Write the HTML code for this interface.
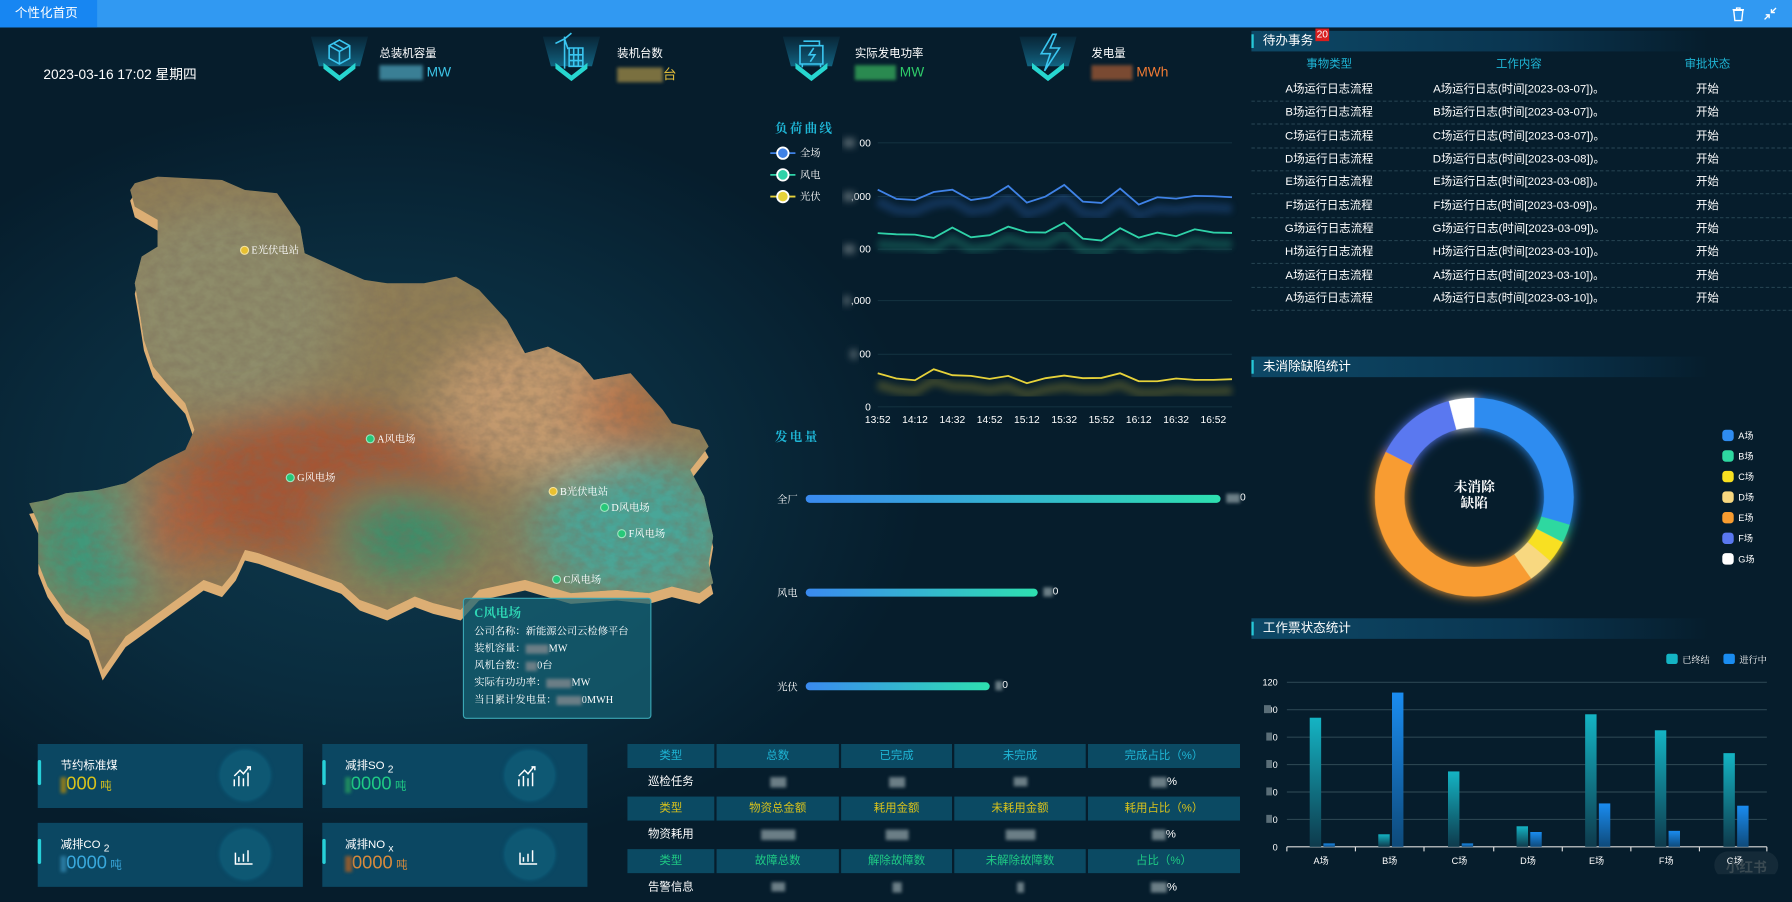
<!DOCTYPE html>
<html><head><meta charset="utf-8">
<style>
*{margin:0;padding:0;box-sizing:border-box}
html,body{width:1792px;height:902px;overflow:hidden;background:#051a29}
#s{position:absolute;left:0;top:0;width:1568px;height:789px;transform:scale(1.142857);transform-origin:0 0;
 font-family:"Liberation Sans","Noto Sans CJK SC",sans-serif;color:#fff;
 background:radial-gradient(ellipse 600px 420px at 330px 420px,#0e3a4e 0%,#0a2c3e 45%,#061d2c 80%),#051a29;overflow:hidden}
.a{position:absolute;white-space:nowrap}
.blur{display:inline-block;background:#6b7e86;filter:blur(1.5px);vertical-align:middle}
.hd{position:absolute;left:1095px;width:400px;height:18px;background:linear-gradient(90deg,#0d4866,#0a3550 60%,rgba(6,29,44,0));font-size:11px;line-height:18px;padding-left:10px}
.hd:before{content:"";position:absolute;left:0;top:3px;width:2px;height:12px;background:#27c8d8}
.tr{position:absolute;left:1095px;width:473px;height:20px;border-bottom:1px dashed #23404e;font-size:10px;line-height:20px}
.tr span{position:absolute;transform:translateX(-50%)}
.card{position:absolute;width:232px;height:56px;background:#0b4762}
.card:before{content:"";position:absolute;left:0;top:14px;width:3px;height:22px;background:#27d0d8;border-radius:2px}
.card .t{position:absolute;left:20px;top:10px;font-size:10px}
.card .v{position:absolute;left:20px;top:27px;font-size:16px}
.card .v small{font-size:10px;margin-left:3px}
.card .c{position:absolute;left:160px;top:6px;width:43px;height:43px;border-radius:50%;background:#0e5873;box-shadow:0 0 4px #0f6a88}
.tb{position:absolute;left:549px;top:651px;width:536px}
.row{position:absolute;left:0;width:536px;height:23px}
.cell{position:absolute;top:0;height:21px;font-size:10px;line-height:21px;text-align:center}
.h .cell{background:#0b4a63}
.sf{font-family:"Liberation Serif","Noto Serif CJK SC",serif}
.ml{position:absolute;font-size:9px;white-space:nowrap;font-family:"Liberation Serif","Noto Serif CJK SC",serif;line-height:10px}
.ml i{display:inline-block;width:8px;height:8px;border-radius:50%;border:1px solid #fff8;margin-right:2px;vertical-align:-1px}
</style></head><body>
<div id="s">
<!-- top bar -->
<div class="a" style="left:0;top:0;width:1568px;height:24px;background:#3199f2"></div>
<div class="a" style="left:0;top:0;width:85px;height:24px;background:#1786f2;font-size:11px;line-height:24px;padding-left:13px">个性化首页</div>
<svg class="a" style="left:1514px;top:5px" width="14" height="14" viewBox="0 0 14 14"><path d="M3 4h8l-1 9H4z M2 3.5h10 M5.5 3.5V2h3v1.5" fill="none" stroke="#fff" stroke-width="1.2"/></svg>
<svg class="a" style="left:1543px;top:6px" width="12" height="12" viewBox="0 0 12 12"><path d="M11 1L7 5M7 2v3h3 M1 11l4-4M2 7h3v3" fill="none" stroke="#fff" stroke-width="1.2"/></svg>

<!-- date -->
<div class="a" style="left:38px;top:56px;font-size:12px">2023-03-16 17:02 星期四</div>

<!-- header stats -->
<svg class="a" style="left:0;top:24px" width="1090" height="60" viewBox="0 24 1090 60">
 <defs><linearGradient id="gl" x1="0" y1="0" x2="0" y2="1"><stop offset="0" stop-color="#1a7fa8" stop-opacity=".1"/><stop offset="1" stop-color="#1a9fc8" stop-opacity=".55"/></linearGradient>
 <g id="ic">
  <path d="M-25 32 L25 32 L18 58 L-18 58Z" fill="url(#gl)"/>
  <path d="M-14 55 L0 66 L14 55 L14 60 L0 71 L-14 60Z" fill="#27d6d0"/>
 </g></defs>
 <use href="#ic" x="297"/><use href="#ic" x="500"/><use href="#ic" x="710"/><use href="#ic" x="917"/>
 <g fill="none" stroke="#3ac6f0" stroke-width="1.4">
  <path d="M288 40l9-5 9 5v11l-9 5-9-5z M288 40l9 5 9-5 M297 45v11 M292 38l9 5"/>
  <path d="M494 60V32 M494 34l-8 4 M494 34l6-5 M494 34l3 9 M498 42h12v16h-12z M502 42v16 M506 42v16 M498 48h12 M498 53h12"/>
  <path d="M700 40h20v16h-20z M703 36h14v4 M712 42l-4 6h5l-4 6 M702 56v3 M718 56v3"/>
  <path d="M921 30l-10 17h8l-5 15 13-20h-8l5-12z"/>
 </g>
</svg>
<div class="a" style="left:332px;top:38px;font-size:10px">总装机容量</div>
<div class="a" style="left:540px;top:38px;font-size:10px">装机台数</div>
<div class="a" style="left:748px;top:38px;font-size:10px">实际发电功率</div>
<div class="a" style="left:955px;top:38px;font-size:10px">发电量</div>
<div class="a" style="left:332px;top:56px;font-size:12px;color:#3cc4e6"><span class="blur" style="width:38px;height:13px;background:#3a7f95"></span> MW</div>
<div class="a" style="left:540px;top:56px;font-size:12px;color:#e2bd3a"><span class="blur" style="width:40px;height:13px;background:#7a7040"></span>台</div>
<div class="a" style="left:748px;top:56px;font-size:12px;color:#2fcc6a"><span class="blur" style="width:36px;height:13px;background:#2a8a50"></span> MW</div>
<div class="a" style="left:955px;top:56px;font-size:12px;color:#f07a34"><span class="blur" style="width:36px;height:13px;background:#7a4a32"></span> MWh</div>

<!-- map -->
<svg class="a" style="left:0;top:0" width="760" height="789" viewBox="0 0 760 789">
 <defs>
  <clipPath id="cp"><polygon id="pg" points="250,40 300,20 440,30 490,60 560,70 610,170 620,250 700,300 750,330 800,340 880,340 950,320 1000,360 1060,450 1100,550 1150,530 1220,580 1250,630 1330,610 1400,720 1420,760 1480,780 1500,830 1460,900 1490,980 1510,1100 1500,1180 1510,1240 1480,1270 1420,1250 1370,1270 1300,1260 1200,1270 1100,1230 1000,1260 960,1320 900,1300 860,1280 800,1320 740,1290 700,1240 620,1200 560,1170 520,1150 490,1140 470,1200 440,1250 400,1230 340,1290 280,1350 230,1400 200,1460 180,1500 150,1380 100,1330 60,1250 40,1180 40,1060 20,1000 60,990 100,970 170,960 230,940 300,880 360,840 380,780 360,700 320,640 290,590 270,510 260,420 250,340 265,260 300,230 300,150 250,110 240,60"/></clipPath>
  <filter id="bl" x="-20%" y="-20%" width="140%" height="140%"><feGaussianBlur stdDeviation="60"/></filter>
  <filter id="tx"><feTurbulence type="fractalNoise" baseFrequency="0.04" numOctaves="3" seed="3"/><feColorMatrix values="0 0 0 0 0.2  0 0 0 0 0.15  0 0 0 0 0.1  0 0 0 -1.6 1.1"/></filter>
 </defs>
 <g transform="translate(17.5,148.7) scale(0.4017,0.2916)">
  <use href="#pg" transform="translate(0,32)" fill="#dcae74"/>
  <g clip-path="url(#cp)">
   <rect x="0" y="0" width="1600" height="1600" fill="#8f7d56"/>
   <g filter="url(#bl)">
    <ellipse cx="450" cy="420" rx="260" ry="320" fill="#8e8c6a"/>
    <ellipse cx="650" cy="950" rx="330" ry="230" fill="#a45636"/>
    <ellipse cx="1120" cy="700" rx="220" ry="220" fill="#c39a6e"/>
    <ellipse cx="1320" cy="720" rx="80" ry="120" fill="#b86a40"/>
    <ellipse cx="1340" cy="1080" rx="220" ry="220" fill="#4aa698"/>
    <ellipse cx="830" cy="1090" rx="150" ry="140" fill="#3a8e6a"/>
    <ellipse cx="170" cy="1120" rx="150" ry="200" fill="#3a9a7c"/>
    <ellipse cx="330" cy="1060" rx="80" ry="160" fill="#b0603a"/>
   </g>
   <rect x="0" y="0" width="1600" height="1600" filter="url(#tx)" opacity=".45"/>
  </g>
 </g>
</svg>
<div class="ml" style="left:210px;top:214px"><i style="background:#e8c030"></i>E光伏电站</div>
<div class="ml" style="left:320px;top:379px"><i style="background:#27c878"></i>A风电场</div>
<div class="ml" style="left:250px;top:413px"><i style="background:#27c878"></i>G风电场</div>
<div class="ml" style="left:480px;top:425px"><i style="background:#e8c030"></i>B光伏电站</div>
<div class="ml" style="left:525px;top:439px"><i style="background:#27c878"></i>D风电场</div>
<div class="ml" style="left:540px;top:462px"><i style="background:#27c878"></i>F风电场</div>
<div class="ml" style="left:483px;top:502px"><i style="background:#27c878"></i>C风电场</div>
<!-- tooltip -->
<div class="a sf" style="left:405px;top:523px;width:165px;height:106px;background:rgba(22,100,118,.72);border:1px solid #3aa6b4;border-radius:3px;font-size:9px;line-height:15px;padding:5px 0 0 9px">
 <div style="color:#2ed6b4;font-size:11px;font-weight:bold;line-height:16px">C风电场</div>
 <div>公司名称：新能源公司云检修平台</div>
 <div>装机容量：<span class="blur" style="width:20px;height:8px"></span>MW</div>
 <div>风机台数：<span class="blur" style="width:10px;height:8px"></span>0台</div>
 <div>实际有功功率：<span class="blur" style="width:22px;height:8px"></span>MW</div>
 <div>当日累计发电量：<span class="blur" style="width:22px;height:8px"></span>0MWH</div>
</div>

<!-- line chart -->
<div class="a sf" style="left:678px;top:104px;font-size:11px;color:#1fb6d6;font-weight:bold;letter-spacing:2px">负荷曲线</div>
<div class="a sf" style="left:678px;top:374px;font-size:11px;color:#1fb6d6;font-weight:bold;letter-spacing:2px">发电量</div>
<svg class="a" style="left:670px;top:110px" width="430" height="270" viewBox="670 110 430 270">
 <defs><filter id="gf"><feGaussianBlur stdDeviation="3"/></filter></defs>
 <g stroke="#12303e" stroke-width="1"><path d="M768 125H1078M768 172H1078M768 218H1078M768 263H1078M768 310H1078M768 356H1078"/></g>
 <g font-size="9" fill="#fff" text-anchor="end" font-family="Liberation Sans,sans-serif">
  <text x="762" y="128">00</text><text x="762" y="175">,000</text><text x="762" y="221">00</text><text x="762" y="266">,000</text><text x="762" y="313">00</text><text x="762" y="359">0</text>
 </g>
 <g fill="#52646c" filter="url(#gf)"><rect x="738" y="121" width="10" height="8"/><rect x="738" y="168" width="10" height="8"/><rect x="738" y="214" width="10" height="8"/><rect x="738" y="259" width="6" height="8"/><rect x="744" y="306" width="6" height="8"/></g>
 <g font-size="9" fill="#fff" text-anchor="middle" font-family="Liberation Sans,sans-serif">
  <text x="768" y="370">13:52</text><text x="800.6" y="370">14:12</text><text x="833.3" y="370">14:32</text><text x="865.9" y="370">14:52</text><text x="898.5" y="370">15:12</text><text x="931.2" y="370">15:32</text><text x="963.8" y="370">15:52</text><text x="996.4" y="370">16:12</text><text x="1029.1" y="370">16:32</text><text x="1061.7" y="370">16:52</text>
 </g>
 <g fill="none" stroke-width="1.6">
  <polyline opacity=".25" stroke-width="8" filter="url(#gf)" stroke="#3a7ae0" transform="translate(0,10)" points="768,166 784.3,174 800.6,175 817,168 833.3,166 849.6,175 865.9,172.6 882.2,162.7 898.5,177.3 914.8,172 931.2,161.8 947.5,176.4 963.8,177.6 980.1,165 996.4,179 1012.7,172.6 1029.1,173.8 1045.4,171.4 1061.7,171.7 1078,172.6"/>
  <polyline opacity=".25" stroke-width="8" filter="url(#gf)" stroke="#2ec8a0" transform="translate(0,10)" points="768,204 784.3,205 800.6,205.3 817,208.2 833.3,199.1 849.6,207.6 865.9,205.8 882.2,198.3 898.5,203.2 914.8,203.5 931.2,194.8 947.5,208.8 963.8,210.5 980.1,199.7 996.4,207.9 1012.7,203.5 1029.1,206.7 1045.4,200.6 1061.7,203.5 1078,203.8"/>
  <polyline opacity=".25" stroke-width="8" filter="url(#gf)" stroke="#d8c030" transform="translate(0,10)" points="768,326.6 784.3,331.2 800.6,332.7 817,323.1 833.3,328.3 849.6,328.9 865.9,331.5 882.2,328.9 898.5,335.3 914.8,330.9 931.2,328.6 947.5,330.9 963.8,330.7 980.1,326.6 996.4,333.6 1012.7,333.6 1029.1,331.2 1045.4,332.4 1061.7,332.4 1078,331.8"/>
  <polyline stroke="#3f82e6" points="768,166 784.3,174 800.6,175 817,168 833.3,166 849.6,175 865.9,172.6 882.2,162.7 898.5,177.3 914.8,172 931.2,161.8 947.5,176.4 963.8,177.6 980.1,165 996.4,179 1012.7,172.6 1029.1,173.8 1045.4,171.4 1061.7,171.7 1078,172.6"/>
  <polyline stroke="#2fd2a8" points="768,204 784.3,205 800.6,205.3 817,208.2 833.3,199.1 849.6,207.6 865.9,205.8 882.2,198.3 898.5,203.2 914.8,203.5 931.2,194.8 947.5,208.8 963.8,210.5 980.1,199.7 996.4,207.9 1012.7,203.5 1029.1,206.7 1045.4,200.6 1061.7,203.5 1078,203.8"/>
  <polyline stroke="#e6d23a" points="768,326.6 784.3,331.2 800.6,332.7 817,323.1 833.3,328.3 849.6,328.9 865.9,331.5 882.2,328.9 898.5,335.3 914.8,330.9 931.2,328.6 947.5,330.9 963.8,330.7 980.1,326.6 996.4,333.6 1012.7,333.6 1029.1,331.2 1045.4,332.4 1061.7,332.4 1078,331.8"/>
 </g>
 <g stroke-width="1.6"><path d="M674 134h22" stroke="#3f82e6"/><circle cx="685" cy="134" r="5" fill="#3f82e6" stroke="#fff"/>
 <path d="M674 153h22" stroke="#2fd2a8"/><circle cx="685" cy="153" r="5" fill="#2fd2a8" stroke="#fff"/>
 <path d="M674 172h22" stroke="#e6d23a"/><circle cx="685" cy="172" r="5" fill="#e6d23a" stroke="#fff"/></g>
 <g font-size="9" fill="#fff" font-family="Liberation Serif,Noto Serif CJK SC,serif"><text x="700" y="137">全场</text><text x="700" y="156">风电</text><text x="700" y="175">光伏</text></g>
</svg>

<!-- production bars -->
<div class="a sf" style="left:680px;top:430px;font-size:9px">全厂</div>
<div class="a" style="left:705px;top:433px;width:363px;height:7px;border-radius:4px;background:linear-gradient(90deg,#3a8af0,#2ee0b0)"></div>
<div class="a" style="left:1073px;top:430px;font-size:9px"><span class="blur" style="width:12px;height:8px"></span>0</div>
<div class="a sf" style="left:680px;top:512px;font-size:9px">风电</div>
<div class="a" style="left:705px;top:515px;width:203px;height:7px;border-radius:4px;background:linear-gradient(90deg,#3a8af0,#2ee0b0)"></div>
<div class="a" style="left:913px;top:512px;font-size:9px"><span class="blur" style="width:8px;height:8px"></span>0</div>
<div class="a sf" style="left:680px;top:594px;font-size:9px">光伏</div>
<div class="a" style="left:705px;top:597px;width:161px;height:7px;border-radius:4px;background:linear-gradient(90deg,#3a8af0,#2ee0b0)"></div>
<div class="a" style="left:871px;top:594px;font-size:9px"><span class="blur" style="width:6px;height:8px"></span>0</div>

<!-- todo table -->
<div class="hd" style="top:27px">待办事务<span style="position:absolute;left:56px;top:-2px;background:#d81e1e;font-size:9px;line-height:11px;padding:0 1px">20</span></div>
<div class="tr" style="top:47px;color:#1fb6d6;border:none"><span style="left:68px">事物类型</span><span style="left:234px">工作内容</span><span style="left:399px">审批状态</span></div>
<div class="tr" style="top:69px"><span style="left:68px">A场运行日志流程</span><span style="left:234px">A场运行日志(时间[2023-03-07])。</span><span style="left:399px">开始</span></div>
<div class="tr" style="top:89px"><span style="left:68px">B场运行日志流程</span><span style="left:234px">B场运行日志(时间[2023-03-07])。</span><span style="left:399px">开始</span></div>
<div class="tr" style="top:110px"><span style="left:68px">C场运行日志流程</span><span style="left:234px">C场运行日志(时间[2023-03-07])。</span><span style="left:399px">开始</span></div>
<div class="tr" style="top:130px"><span style="left:68px">D场运行日志流程</span><span style="left:234px">D场运行日志(时间[2023-03-08])。</span><span style="left:399px">开始</span></div>
<div class="tr" style="top:150px"><span style="left:68px">E场运行日志流程</span><span style="left:234px">E场运行日志(时间[2023-03-08])。</span><span style="left:399px">开始</span></div>
<div class="tr" style="top:171px"><span style="left:68px">F场运行日志流程</span><span style="left:234px">F场运行日志(时间[2023-03-09])。</span><span style="left:399px">开始</span></div>
<div class="tr" style="top:191px"><span style="left:68px">G场运行日志流程</span><span style="left:234px">G场运行日志(时间[2023-03-09])。</span><span style="left:399px">开始</span></div>
<div class="tr" style="top:211px"><span style="left:68px">H场运行日志流程</span><span style="left:234px">H场运行日志(时间[2023-03-10])。</span><span style="left:399px">开始</span></div>
<div class="tr" style="top:232px"><span style="left:68px">A场运行日志流程</span><span style="left:234px">A场运行日志(时间[2023-03-10])。</span><span style="left:399px">开始</span></div>
<div class="tr" style="top:252px"><span style="left:68px">A场运行日志流程</span><span style="left:234px">A场运行日志(时间[2023-03-10])。</span><span style="left:399px">开始</span></div>

<!-- defects donut -->
<div class="hd" style="top:312px">未消除缺陷统计</div>
<svg class="a" style="left:1180px;top:330px" width="388" height="210" viewBox="1180 330 388 210">
 <defs><filter id="gw" x="-30%" y="-30%" width="160%" height="160%"><feGaussianBlur stdDeviation="5" result="b"/><feMerge><feMergeNode in="b"/><feMergeNode in="SourceGraphic"/></feMerge></filter></defs>
 <g transform="rotate(-90 1290 435)" fill="none" stroke-width="26" filter="url(#gw)">
  <circle cx="1290" cy="435" r="74" stroke="#2f8cf0" stroke-dasharray="137 465" stroke-dashoffset="0"/>
  <circle cx="1290" cy="435" r="74" stroke="#2ed8a0" stroke-dasharray="14.2 465" stroke-dashoffset="-137"/>
  <circle cx="1290" cy="435" r="74" stroke="#f8e020" stroke-dasharray="16.8 465" stroke-dashoffset="-151.1"/>
  <circle cx="1290" cy="435" r="74" stroke="#f8d880" stroke-dasharray="19.4 465" stroke-dashoffset="-167.9"/>
  <circle cx="1290" cy="435" r="74" stroke="#f89c30" stroke-dasharray="196.3 465" stroke-dashoffset="-187.3"/>
  <circle cx="1290" cy="435" r="74" stroke="#5a78f0" stroke-dasharray="62 465" stroke-dashoffset="-383.6"/>
  <circle cx="1290" cy="435" r="74" stroke="#ffffff" stroke-dasharray="19.4 465" stroke-dashoffset="-445.6"/>
 </g>
 <g font-family="Liberation Serif,Noto Serif CJK SC,serif" font-size="12" font-weight="bold" fill="#fff" text-anchor="middle"><text x="1290" y="430">未消除</text><text x="1290" y="444">缺陷</text></g>
 <g font-size="8" fill="#fff" font-family="Liberation Sans,Noto Sans CJK SC,sans-serif">
  <rect x="1507" y="376" width="10" height="10" rx="3" fill="#2f8cf0"/><text x="1521" y="384">A场</text>
  <rect x="1507" y="394" width="10" height="10" rx="3" fill="#2ed8a0"/><text x="1521" y="402">B场</text>
  <rect x="1507" y="412" width="10" height="10" rx="3" fill="#f8e020"/><text x="1521" y="420">C场</text>
  <rect x="1507" y="430" width="10" height="10" rx="3" fill="#f8d880"/><text x="1521" y="438">D场</text>
  <rect x="1507" y="448" width="10" height="10" rx="3" fill="#f89c30"/><text x="1521" y="456">E场</text>
  <rect x="1507" y="466" width="10" height="10" rx="3" fill="#5a78f0"/><text x="1521" y="474">F场</text>
  <rect x="1507" y="484" width="10" height="10" rx="3" fill="#ffffff"/><text x="1521" y="492">G场</text>
 </g>
</svg>

<!-- work ticket bars -->
<div class="hd" style="top:541px">工作票状态统计</div>
<svg class="a" style="left:1095px;top:565px" width="473" height="200" viewBox="1095 565 473 200">
 <defs>
  <linearGradient id="tg" x1="0" y1="0" x2="0" y2="1"><stop offset="0" stop-color="#14b4c4"/><stop offset="1" stop-color="#0e3a4c"/></linearGradient>
  <linearGradient id="bg2" x1="0" y1="0" x2="0" y2="1"><stop offset="0" stop-color="#1a8cf0"/><stop offset="1" stop-color="#0e4a7a"/></linearGradient>
 </defs>
 <g stroke="#2a4450" stroke-width="1"><path d="M1126 597H1546M1126 621H1546M1126 645H1546M1126 669H1546M1126 693H1546M1126 717H1546"/></g>
 <path d="M1126 741H1546 M1126 741v4 M1186 741v4 M1246 741v4 M1307 741v4 M1367 741v4 M1427 741v4 M1487 741v4 M1546 741v4" stroke="#ddd" stroke-width="1"/>
 <g font-size="8" fill="#fff" text-anchor="end" font-family="Liberation Sans,sans-serif"><text x="1118" y="600">120</text><text x="1118" y="624">00</text><text x="1118" y="648">0</text><text x="1118" y="672">0</text><text x="1118" y="696">0</text><text x="1118" y="720">0</text><text x="1118" y="744">0</text></g>
 <g fill="#5a6e78"><rect x="1106" y="617" width="6" height="7"/><rect x="1108" y="641" width="5" height="7"/><rect x="1108" y="665" width="5" height="7"/><rect x="1108" y="689" width="5" height="7"/><rect x="1108" y="713" width="5" height="7"/></g>
 <g fill="url(#tg)">
  <rect x="1146" y="628" width="10" height="113"/><rect x="1206" y="730" width="10" height="11"/><rect x="1267" y="675" width="10" height="66"/><rect x="1327" y="723" width="10" height="18"/><rect x="1387" y="625" width="10" height="116"/><rect x="1448" y="639" width="10" height="102"/><rect x="1508" y="659" width="10" height="82"/>
 </g>
 <g fill="url(#bg2)">
  <rect x="1158" y="738" width="10" height="3"/><rect x="1218" y="606" width="10" height="135"/><rect x="1279" y="738" width="10" height="3"/><rect x="1339" y="728" width="10" height="13"/><rect x="1399" y="703" width="10" height="38"/><rect x="1460" y="727" width="10" height="14"/><rect x="1520" y="705" width="10" height="36"/>
 </g>
 <g font-size="8" fill="#fff" text-anchor="middle" font-family="Liberation Sans,Noto Sans CJK SC,sans-serif">
  <text x="1156" y="756">A场</text><text x="1216" y="756">B场</text><text x="1277" y="756">C场</text><text x="1337" y="756">D场</text><text x="1397" y="756">E场</text><text x="1458" y="756">F场</text><text x="1518" y="756">G场</text>
 </g>
 <rect x="1458" y="572" width="10" height="9" rx="2" fill="#14b4c4"/><text x="1472" y="580" font-size="8" fill="#fff" font-family="Liberation Serif,Noto Serif CJK SC,serif">已终结</text>
 <rect x="1508" y="572" width="10" height="9" rx="2" fill="#1a8cf0"/><text x="1522" y="580" font-size="8" fill="#fff" font-family="Liberation Serif,Noto Serif CJK SC,serif">进行中</text>
 <rect x="1500" y="745" width="56" height="24" rx="12" fill="#ffffff" opacity=".06"/>
 <text x="1528" y="763" font-size="12" fill="#3a4a52" text-anchor="middle" font-weight="bold">小红书</text>
</svg>

<!-- cards -->
<div class="card" style="left:33px;top:651px"><div class="t">节约标准煤</div><div class="v" style="color:#d8c21c"><span class="blur" style="width:5px;height:14px;background:#8a7a20"></span>000<small>吨</small></div><div class="c"></div></div>
<div class="card" style="left:282px;top:651px"><div class="t">减排SO <sub style="font-size:9px">2</sub></div><div class="v" style="color:#1fca84"><span class="blur" style="width:5px;height:14px;background:#1f8a60"></span>0000<small>吨</small></div><div class="c"></div></div>
<div class="card" style="left:33px;top:720px"><div class="t">减排CO <sub style="font-size:9px">2</sub></div><div class="v" style="color:#39a8dc"><span class="blur" style="width:5px;height:14px;background:#2a7aa0"></span>0000<small>吨</small></div><div class="c"></div></div>
<div class="card" style="left:282px;top:720px"><div class="t">减排NO <sub style="font-size:9px">x</sub></div><div class="v" style="color:#d88a3c"><span class="blur" style="width:6px;height:14px;background:#8a5a30"></span>0000<small>吨</small></div><div class="c"></div></div>
<svg class="a" style="left:0;top:640px" width="560" height="150" viewBox="0 640 560 150" fill="none" stroke="#fff" stroke-width="1.3">
 <path d="M205 688v-6M209 688v-9M213 688v-7M217 688v-12 M205 679l5-5 3 3 5-6 M216 671h3v3"/>
 <path d="M454 688v-6M458 688v-9M462 688v-7M466 688v-12 M454 679l5-5 3 3 5-6 M465 671h3v3"/>
 <path d="M206 746v10h15 M209 754v-4M213 754v-7M217 754v-10"/>
 <path d="M455 746v10h15 M458 754v-4M462 754v-7M466 754v-10"/>
</svg>

<!-- stats table -->
<div class="tb">
 <div class="row h" style="top:0;color:#1fb6d6"><div class="cell" style="left:0;width:76px">类型</div><div class="cell" style="left:78px;width:107px">总数</div><div class="cell" style="left:187px;width:97px">已完成</div><div class="cell" style="left:286px;width:115px">未完成</div><div class="cell" style="left:403px;width:133px">完成占比（%）</div></div>
 <div class="row" style="top:23px"><div class="cell" style="left:0;width:76px">巡检任务</div><div class="cell" style="left:78px;width:107px"><span class="blur" style="width:14px;height:9px"></span></div><div class="cell" style="left:187px;width:97px"><span class="blur" style="width:14px;height:9px"></span></div><div class="cell" style="left:286px;width:115px"><span class="blur" style="width:12px;height:8px"></span></div><div class="cell" style="left:403px;width:133px"><span class="blur" style="width:14px;height:9px"></span>%</div></div>
 <div class="row h" style="top:46px;color:#d8c21c"><div class="cell" style="left:0;width:76px">类型</div><div class="cell" style="left:78px;width:107px">物资总金额</div><div class="cell" style="left:187px;width:97px">耗用金额</div><div class="cell" style="left:286px;width:115px">未耗用金额</div><div class="cell" style="left:403px;width:133px">耗用占比（%）</div></div>
 <div class="row" style="top:69px"><div class="cell" style="left:0;width:76px">物资耗用</div><div class="cell" style="left:78px;width:107px"><span class="blur" style="width:30px;height:9px"></span></div><div class="cell" style="left:187px;width:97px"><span class="blur" style="width:20px;height:9px"></span></div><div class="cell" style="left:286px;width:115px"><span class="blur" style="width:26px;height:9px"></span></div><div class="cell" style="left:403px;width:133px"><span class="blur" style="width:12px;height:9px"></span>%</div></div>
 <div class="row h" style="top:92px;color:#1fca84"><div class="cell" style="left:0;width:76px">类型</div><div class="cell" style="left:78px;width:107px">故障总数</div><div class="cell" style="left:187px;width:97px">解除故障数</div><div class="cell" style="left:286px;width:115px">未解除故障数</div><div class="cell" style="left:403px;width:133px">占比（%）</div></div>
 <div class="row" style="top:115px"><div class="cell" style="left:0;width:76px">告警信息</div><div class="cell" style="left:78px;width:107px"><span class="blur" style="width:12px;height:8px"></span></div><div class="cell" style="left:187px;width:97px"><span class="blur" style="width:8px;height:9px"></span></div><div class="cell" style="left:286px;width:115px"><span class="blur" style="width:6px;height:9px"></span></div><div class="cell" style="left:403px;width:133px"><span class="blur" style="width:14px;height:9px"></span>%</div></div>
</div>
</div>
</body></html>
